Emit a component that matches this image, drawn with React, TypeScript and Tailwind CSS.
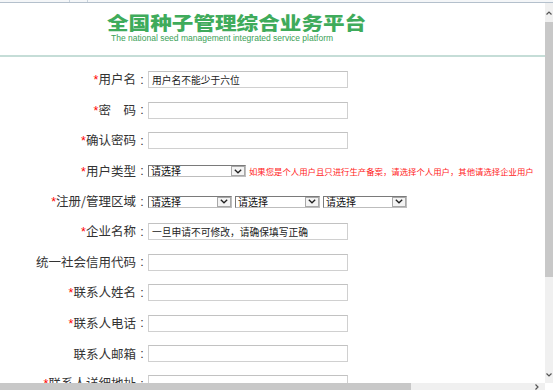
import React from "react";

const CJK = { fontFamily: '"Noto Sans CJK SC", "Liberation Sans", sans-serif' };

function Label({ text, required }: { text: string; required?: boolean }) {
  return (
    <div className="w-[148px] shrink-0 flex justify-end items-center text-[12.5px] leading-[14px] text-[#333]" style={CJK}>
      <span className="whitespace-nowrap">
        {required && <span className="text-[#ff0000]" style={{ fontFamily: '"Liberation Sans", sans-serif' }}>*</span>}
        {text}
      </span>
      <span className="w-[12px] text-center" style={{ fontFamily: '"Liberation Sans", sans-serif' }}>:</span>
    </div>
  );
}

function Input({ value }: { value?: string }) {
  return (
    <div className="w-[200px] h-[17px] border border-[#d0d0d0] border-t-[#c2c2c2] bg-white flex items-center pl-[3px] text-[9.75px] leading-[10px] text-[#222]" style={CJK}>
      {value}
    </div>
  );
}

function Chevron() {
  return (
    <svg width="8" height="5" viewBox="0 0 8 5">
      <path d="M0.8 0.8 L4 3.8 L7.2 0.8" stroke="#222" strokeWidth="1.3" fill="none" />
    </svg>
  );
}

function Select({ w }: { w: string }) {
  return (
    <div className={`${w} h-[12px] border border-[#7a7a7a] border-r-[#bdbdbd] border-b-[#bdbdbd] bg-white flex items-stretch`}>
      <div className="flex-1 flex items-center pl-[2px] text-[10px] leading-[10px] text-[#111]" style={CJK}>请选择</div>
      <div className="w-[14px] border border-[#a8a8a8] bg-[#f4f4f4] flex items-center justify-center">
        <Chevron />
      </div>
    </div>
  );
}

function Row({ children }: { children: React.ReactNode }) {
  return <div className="h-[30.4px] flex items-center">{children}</div>;
}

export default function App() {
  return (
    <div className="w-[553px] h-[390px] overflow-hidden bg-white flex flex-col">
      {/* top strip */}
      <div className="h-[3px] shrink-0 bg-[#f4f6f8] border-b border-[#b4c0cc] flex">
        <div className="w-[70px] border-r border-[#c8d2dc]" />
        <div className="w-[18px] border-r border-[#c8d2dc]" />
      </div>
      <div className="flex-1 flex min-h-0">
        {/* content */}
        <div className="flex-1 overflow-hidden">
          <div className="h-[54px] border-b-2 border-[#c5ddd7] pl-[107px] pt-[10px]">
            <div
              className="h-[21px] text-[18px] leading-[18px] font-black text-[#3fab5b] whitespace-nowrap origin-left scale-x-[1.2]"
              style={CJK}
            >
              全国种子管理综合业务平台
            </div>
            <div
              className="h-[8px] pl-[4px] text-[8.5px] leading-[8px] text-[#3a9f57] whitespace-nowrap"
              style={{ fontFamily: '"Liberation Sans", Arial, sans-serif' }}
            >
              The national seed management integrated service platform
            </div>
          </div>
          <div className="pt-[7.8px]">
            <Row>
              <Label text="用户名" required />
              <Input value="用户名不能少于六位" />
            </Row>
            <Row>
              <Label text="密　码" required />
              <Input />
            </Row>
            <Row>
              <Label text="确认密码" required />
              <Input />
            </Row>
            <Row>
              <Label text="用户类型" required />
              <Select w="w-[98px]" />
              <div className="ml-[3px] text-[8.4px] leading-[10px] text-[#ff1a1a] whitespace-nowrap" style={CJK}>
                如果您是个人用户且只进行生产备案，请选择个人用户，其他请选择企业用户
              </div>
            </Row>
            <Row>
              <Label text="注册/管理区域" required />
              <div className="flex gap-[3px]">
                <Select w="w-[84px]" />
                <Select w="w-[85px]" />
                <Select w="w-[84px]" />
              </div>
            </Row>
            <Row>
              <Label text="企业名称" required />
              <Input value="一旦申请不可修改，请确保填写正确" />
            </Row>
            <Row>
              <Label text="统一社会信用代码" />
              <Input />
            </Row>
            <Row>
              <Label text="联系人姓名" required />
              <Input />
            </Row>
            <Row>
              <Label text="联系人电话" required />
              <Input />
            </Row>
            <Row>
              <Label text="联系人邮箱" />
              <Input />
            </Row>
            <Row>
              <Label text="联系人详细地址" required />
              <Input />
            </Row>
          </div>
        </div>
        {/* vertical scrollbar */}
        <div className="w-[8px] shrink-0 bg-[#f0f0f0] flex flex-col">
          <div className="h-[19px] flex items-center justify-center">
            <svg width="6" height="4" viewBox="0 0 6 4">
              <path d="M0.5 3.5 L3 1 L5.5 3.5" stroke="#555" strokeWidth="1.2" fill="none" />
            </svg>
          </div>
          <div className="h-[255px] bg-[#c8c8c8]" />
          <div className="flex-1" />
          <div className="h-[16px] flex items-center justify-center">
            <svg width="6" height="4" viewBox="0 0 6 4">
              <path d="M0.5 0.5 L3 3 L5.5 0.5" stroke="#555" strokeWidth="1.2" fill="none" />
            </svg>
          </div>
        </div>
      </div>
      {/* horizontal scrollbar */}
      <div className="h-[7px] shrink-0 flex">
        <div className="w-[545px] bg-[#f0f0f0] flex items-center">
          <div className="w-[411px] h-full bg-[#c8c8c8]" />
          <div className="flex-1" />
          <div className="w-[16px] flex items-center justify-center">
            <svg width="4" height="6" viewBox="0 0 4 6">
              <path d="M0.5 0.5 L3 3 L0.5 5.5" stroke="#555" strokeWidth="1.2" fill="none" />
            </svg>
          </div>
        </div>
        <div className="flex-1 bg-white" />
      </div>
    </div>
  );
}
